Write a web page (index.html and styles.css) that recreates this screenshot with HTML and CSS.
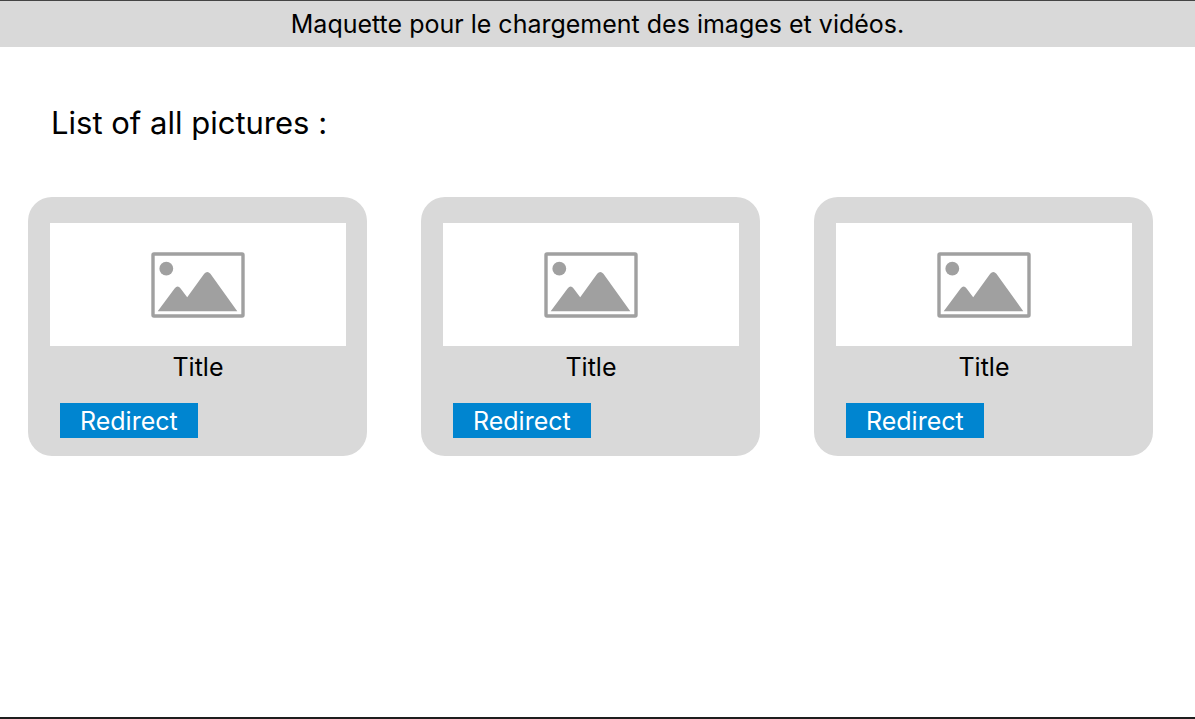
FILE: index.html
```html
<!DOCTYPE html>
<html lang="fr">
<head>
<meta charset="utf-8">
<meta name="viewport" content="width=device-width, initial-scale=1">
<title>Pictures</title>
<link rel="stylesheet" href="styles.css">
</head>
<body>
<svg class="sprite" aria-hidden="true">
  <symbol id="picture" viewBox="0 0 94 66">
    <rect x="2" y="2" width="90" height="62" rx="1" fill="none" stroke="currentColor" stroke-width="3.4"/>
    <circle cx="15.3" cy="16.7" r="6.9" fill="currentColor"/>
    <path fill="currentColor" d="M6.7 59.2 23.6 36.600Q26.600 32.600 29.600 36.600L36.200 45.200 53.200 21.800Q56.300 18 59.400 21.800L86.300 59.200Z"/>
  </symbol>
</svg>
<header class="banner">Maquette pour le chargement des images et vidéos.</header>
<main class="content">
  <h1 class="heading">List of all pictures :</h1>
  <div class="cards">
    <article class="card">
      <div class="preview"><svg class="icon" aria-hidden="true"><use href="#picture"/></svg></div>
      <h2 class="title">Title</h2>
      <button class="redirect" type="button">Redirect</button>
    </article>
    <article class="card">
      <div class="preview"><svg class="icon" aria-hidden="true"><use href="#picture"/></svg></div>
      <h2 class="title">Title</h2>
      <button class="redirect" type="button">Redirect</button>
    </article>
    <article class="card">
      <div class="preview"><svg class="icon" aria-hidden="true"><use href="#picture"/></svg></div>
      <h2 class="title">Title</h2>
      <button class="redirect" type="button">Redirect</button>
    </article>
  </div>
</main>
</body>
</html>
```
FILE: styles.css
```css
* {
  box-sizing: border-box;
}

body {
  display: flex;
  flex-direction: column;
  min-height: 100vh;
  margin: 0;
  border-bottom: 2px solid #1e1e1e;
  background: #fff;
  color: #000;
  font-family: Inter, "Liberation Sans", sans-serif;
  font-size: 25px;
  line-height: 30px;
}

.sprite {
  position: absolute;
  width: 0;
  height: 0;
}

.banner {
  padding: 8px 16px;
  border-top: 1px solid #444;
  background: #d9d9d9;
  text-align: center;
}

.content {
  flex: 1;
  padding: 56px 42px 40px 28px;
}

.heading {
  margin: 0 0 54px 23px;
  font-size: 31px;
  font-weight: 400;
  line-height: 40px;
}

.cards {
  display: grid;
  grid-template-columns: repeat(3, 1fr);
  gap: 54px;
}

.card {
  display: flex;
  flex-direction: column;
  padding: 26px 21px 18px 22px;
  border-radius: 24px;
  background: #d9d9d9;
}

.preview {
  display: flex;
  align-items: center;
  justify-content: center;
  height: 123px;
  background: #fff;
}

.icon {
  width: 94px;
  height: 66px;
  color: #a0a0a0;
}

.title {
  margin: 6px 0 21px;
  font-size: 25px;
  font-weight: 400;
  line-height: 30px;
  text-align: center;
}

.redirect {
  align-self: flex-start;
  margin-left: 10px;
  padding: 3px 20px 2px;
  border: 0;
  background: #0085d0;
  color: #fff;
  font: inherit;
}
```
